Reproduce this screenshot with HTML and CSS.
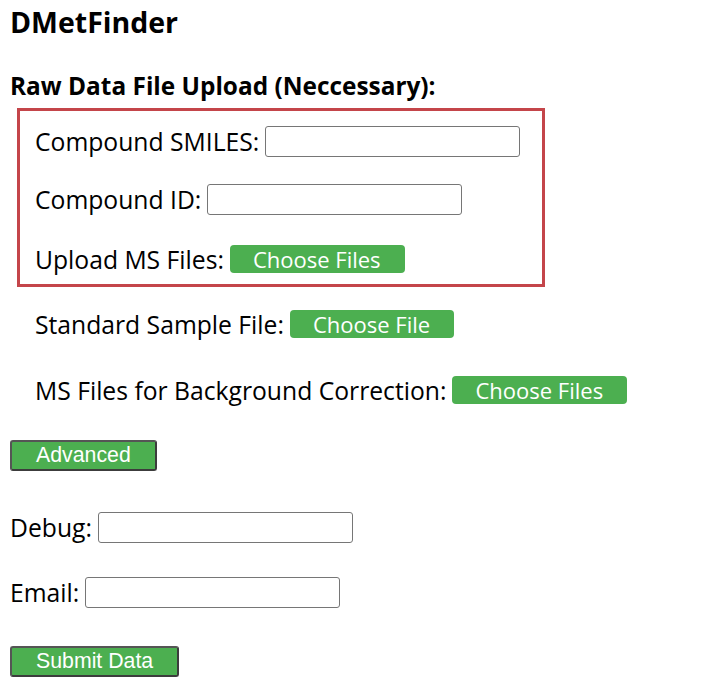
FILE: index.html
```html
<!DOCTYPE html>
<html>
<head>
<meta charset="utf-8">
<link rel="stylesheet" href="styles.css">
</head>
<body>
<h1 class="title">DMetFinder</h1>
<h2 class="subtitle">Raw Data File Upload (Neccessary):</h2>
<div class="box">
  <div class="row r1"><label>Compound SMILES:</label><input class="text" type="text"></div>
  <div class="row r2"><label>Compound ID:</label><input class="text" type="text"></div>
  <div class="row r3"><label>Upload MS Files:</label><span class="file-btn">Choose Files</span></div>
</div>
<div class="extra">
  <div class="row r4"><label>Standard Sample File:</label><span class="file-btn">Choose File</span></div>
  <div class="row r5"><label>MS Files for Background Correction:</label><span class="file-btn">Choose Files</span></div>
</div>
<button class="action adv">Advanced</button>
<div class="row r6"><label>Debug:</label><input class="text" type="text"></div>
<div class="row r7"><label>Email:</label><input class="text" type="text"></div>
<button class="action submit">Submit Data</button>
</body>
</html>
```
FILE: styles.css
```css
html, body {
  margin: 0;
  padding: 0;
  background: #fff;
}
body {
  padding: 0 10px;
  font-family: "Open Sans", "Noto Sans", sans-serif;
  color: #000;
}
.title {
  font-size: 28.5px;
  font-weight: 700;
  margin: 0;
  padding-top: 4px;
  height: 36px;
  line-height: 36px;
}
.subtitle {
  font-size: 24.4px;
  font-weight: 700;
  margin: 30px 0 0 0;
  height: 32px;
  line-height: 32px;
}
.box {
  margin: 6px 0 0 7px;
  width: 492px;
  border: 3px solid #c4454a;
  padding: 14px 15px 9px;
  display: flex;
  flex-direction: column;
  gap: 26px;
}
.row {
  display: flex;
  align-items: center;
  height: 32px;
  font-size: 24.7px;
}
.row label {
  margin-right: 6px;
  white-space: nowrap;
}
.box .r3 { margin-top: 2px; }
.extra {
  padding: 21px 0 0 25px;
  display: flex;
  flex-direction: column;
  gap: 34px;
}
.text {
  width: 255px;
  height: 31px;
  box-sizing: border-box;
  border: 1px solid #767676;
  border-radius: 3px;
  margin: 0;
  padding: 0;
}
.file-btn {
  display: inline-flex;
  align-items: center;
  justify-content: center;
  height: 28px;
  padding: 0 24px 0 23px;
  background: #4caf50;
  color: #fff;
  border-radius: 4px;
  font-size: 22px;
  white-space: nowrap;
}
.action {
  display: block;
  margin: 0;
  background: #4caf50;
  color: #fff;
  font-family: "Liberation Sans", Arial, sans-serif;
  font-size: 21.3px;
  height: 31px;
  padding: 0 24px;
  border: 2px solid #3c3c3c;
  border-top-color: #555;
  border-left-color: #555;
  border-radius: 3px;
  line-height: 27px;
}
.adv { margin-top: 34px; }
.r6 { margin-top: 40px; }
.r7 { margin-top: 33px; }
.submit { margin-top: 38px; }
```
